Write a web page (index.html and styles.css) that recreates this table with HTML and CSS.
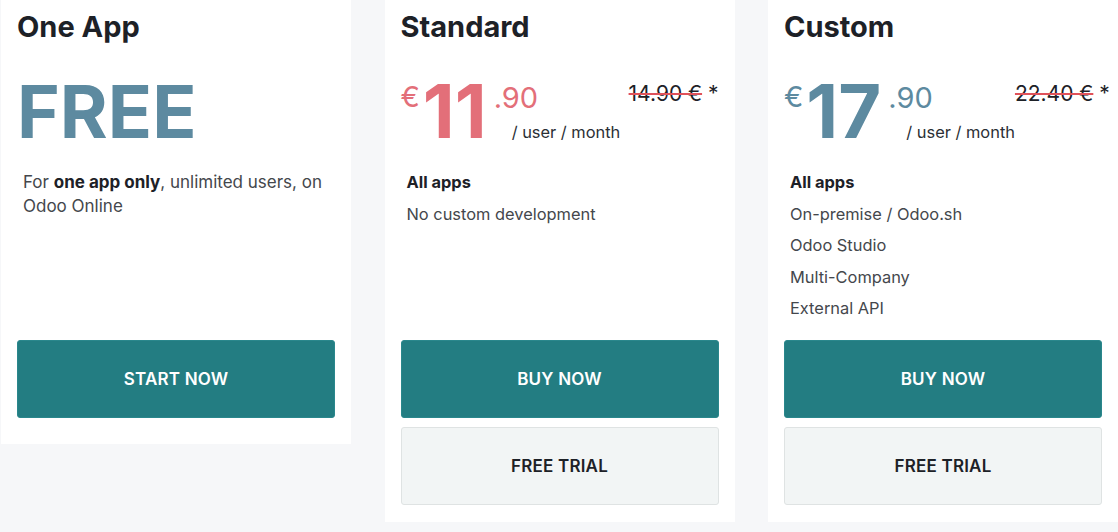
FILE: index.html
```html
<!DOCTYPE html>
<html lang="en">
<head>
<meta charset="utf-8">
<title>Pricing</title>
<link rel="stylesheet" href="styles.css">
</head>
<body>
<div class="plans">
  <div class="card card-free">
    <div class="card-top">
      <h2 class="title">One App</h2>
      <div class="price">
        <span class="big free blue">FREE</span>
      </div>
      <p class="desc">For <b>one app only</b>, unlimited users, on Odoo Online</p>
    </div>
    <a class="btn btn-primary">START NOW</a>
  </div>

  <div class="card">
    <div class="card-top">
      <h2 class="title">Standard</h2>
      <div class="price">
        <span class="cur red">€</span>
        <span class="big red">11</span>
        <span class="sub">
          <span class="cents red">.90</span>
          <span class="per">/ user / month</span>
        </span>
        <span class="old"><s>14.90 €</s> *</span>
      </div>
      <ul class="features">
        <li><b>All apps</b></li>
        <li>No custom development</li>
      </ul>
    </div>
    <a class="btn btn-primary">BUY NOW</a>
    <a class="btn btn-light">FREE TRIAL</a>
  </div>

  <div class="card">
    <div class="card-top">
      <h2 class="title">Custom</h2>
      <div class="price">
        <span class="cur blue">€</span>
        <span class="big blue">17</span>
        <span class="sub">
          <span class="cents blue">.90</span>
          <span class="per">/ user / month</span>
        </span>
        <span class="old"><s>22.40 €</s> *</span>
      </div>
      <ul class="features">
        <li><b>All apps</b></li>
        <li>On-premise / Odoo.sh</li>
        <li>Odoo Studio</li>
        <li>Multi-Company</li>
        <li>External API</li>
      </ul>
    </div>
    <a class="btn btn-primary">BUY NOW</a>
    <a class="btn btn-light">FREE TRIAL</a>
  </div>
</div>
</body>
</html>
```

FILE: styles.css
```css
* { box-sizing: border-box; }

html, body {
  margin: 0;
  padding: 0;
  background: #f6f7f9;
  overflow: hidden;
  font-family: Inter, "Noto Sans", sans-serif;
  color: #4a4d52;
}

.plans {
  display: flex;
  align-items: flex-start;
  gap: 33.5px;
  padding-left: 1px;
  width: 1200px;
}

.card {
  flex: 0 0 350px;
  width: 350px;
  background: #ffffff;
  padding: 0 16px 17px 16px;
  display: flex;
  flex-direction: column;
  gap: 9px;
}

.card-free {
  padding-bottom: 26px;
}

.card-top {
  height: 331px;
}

.title {
  margin: 9px 0 0 0;
  font-size: 29px;
  line-height: 35px;
  font-weight: 700;
  color: #1d2127;
}

.price {
  display: flex;
  align-items: flex-start;
  height: 73px;
  margin-top: 31px;
}

.red { color: #e36f79; }
.blue { color: #5d8aa0; }

.big {
  font-size: 74px;
  line-height: 73px;
  font-weight: 700;
}

.big.free {
  font-size: 73px;
}

.cur {
  font-size: 29px;
  line-height: 29px;
  margin-top: 7px;
  margin-right: 3px;
}

.sub {
  display: flex;
  flex-direction: column;
  margin-left: 7px;
}

.cents {
  font-size: 29px;
  line-height: 29px;
  margin-top: 8px;
}

.per {
  font-size: 16.4px;
  line-height: 24px;
  margin-top: 8px;
  margin-left: 18px;
  color: #2b2f35;
  white-space: nowrap;
}

.old {
  margin-left: auto;
  margin-top: 8px;
  font-size: 21px;
  line-height: 21px;
  color: #1d2127;
  white-space: nowrap;
}

.old s {
  text-decoration-color: #e0525a;
  text-decoration-thickness: 2px;
}

.desc {
  margin: 22px 0 0 0;
  padding-left: 6px;
  font-size: 17px;
  line-height: 24px;
  color: #44474c;
}

.desc b {
  color: #1d2127;
  font-weight: 700;
}

.features {
  list-style: none;
  margin: 22px 0 0 0;
  padding: 0 0 0 6px;
  font-size: 16.4px;
  line-height: 24px;
  color: #44474c;
}

.features li {
  margin-bottom: 7.5px;
}

.features b {
  color: #1d2127;
  font-weight: 700;
}

.btn {
  display: flex;
  align-items: center;
  justify-content: center;
  height: 78px;
  border-radius: 3px;
  font-size: 17px;
  font-weight: 600;
  letter-spacing: 0.2px;
  text-decoration: none;
}

.btn-primary {
  background: #237d82;
  border: 1px solid #2a878c;
  color: #ffffff;
}

.btn-light {
  background: #f2f5f5;
  border: 1px solid #dfe3e3;
  color: #1d2127;
}
```
